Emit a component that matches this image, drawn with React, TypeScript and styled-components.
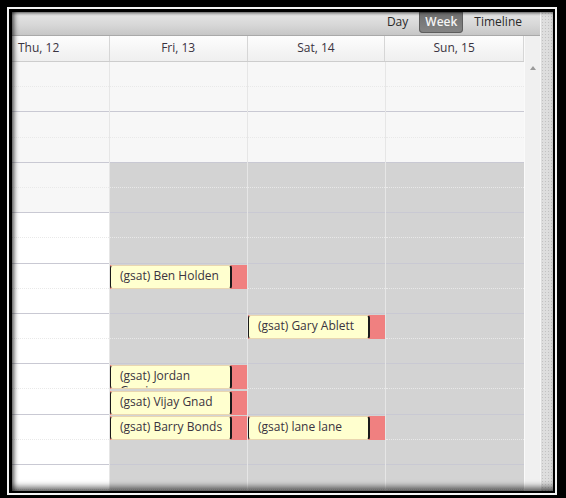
import React from 'react';
import styled, { createGlobalStyle } from 'styled-components';

const GlobalStyle = createGlobalStyle`
  html, body {
    margin: 0;
    padding: 0;
    background: #000;
  }
  body {
    font-family: "Open Sans", "Noto Sans", sans-serif;
    font-size: 12px;
  }
`;

const HALF = 25.2;
const ROWS = 18;

interface Day {
  label: string;
  width: number;
  alignLeft?: boolean;
  lightRows: number;
  openColor: string;
}

interface CalEvent {
  day: number;
  row: number;
  title: string;
}

const days: Day[] = [
  {label: 'Thu, 12', width: 98, alignLeft: true, lightRows: 6, openColor: '#ffffff'},
  {label: 'Fri, 13', width: 138, lightRows: 4, openColor: '#d3d3d3'},
  {label: 'Sat, 14', width: 138, lightRows: 4, openColor: '#d3d3d3'},
  {label: 'Sun, 15', width: 139, lightRows: 4, openColor: '#d3d3d3'},
];

const events: CalEvent[] = [
  {day: 1, row: 8, title: '(gsat) Ben Holden'},
  {day: 2, row: 10, title: '(gsat) Gary Ablett'},
  {day: 1, row: 12, title: '(gsat) Jordan Garrison'},
  {day: 1, row: 13, title: '(gsat) Vijay Gnad'},
  {day: 1, row: 14, title: '(gsat) Barry Bonds'},
  {day: 2, row: 14, title: '(gsat) lane lane'},
];

const Frame = styled.div`
  width: 566px;
  height: 498px;
  box-sizing: border-box;
  background: #000;
  padding: 7px 9px 3px 7px;
`;

const WhiteLine = styled.div`
  height: 100%;
  box-sizing: border-box;
  background: #f4f4f4;
  padding: 2px;
`;

const InnerBlack = styled.div`
  height: 100%;
  box-sizing: border-box;
  background: #000;
  padding: 3px 2px 2px 3px;
`;

const Content = styled.div`
  position: relative;
  display: flex;
  height: 100%;
  overflow: hidden;

  &::after {
    content: '';
    position: absolute;
    inset: 0;
    pointer-events: none;
    box-shadow:
      inset 5px 0 5px -3px rgba(0, 0, 0, 0.65),
      inset 0 -7px 6px -3px rgba(0, 0, 0, 0.6),
      inset 0 3px 3px -2px rgba(0, 0, 0, 0.5);
  }
`;

const Main = styled.div`
  flex: 1;
  display: flex;
  flex-direction: column;
  min-width: 0;
`;

const Strip = styled.div`
  width: 12px;
  flex-shrink: 0;
  border-left: 1px solid #f6f6f6;
  background-color: #dedede;
  background-image: radial-gradient(#c2c2c2 0.7px, transparent 0.9px);
  background-size: 3px 3px;
`;

const Toolbar = styled.div`
  height: 23px;
  flex-shrink: 0;
  display: flex;
  justify-content: flex-end;
  align-items: flex-start;
  padding-right: 10px;
  background: linear-gradient(#c8c8c8 0, #e2e2e2 4px, #d6d6d6 60%, #c6c6c6 100%);
  border-bottom: 1px solid #a9a9a9;
`;

const ViewButton = styled.div<{ $active?: boolean }>`
  height: 21px;
  line-height: 19px;
  padding: 0 ${p => (p.$active ? '6px' : '8px')};
  margin-left: 3px;
  border-radius: 0 0 4px 4px;
  color: ${p => (p.$active ? '#f4f4f4' : '#2a2a2a')};
  font-weight: ${p => (p.$active ? 600 : 400)};
  background: ${p => (p.$active ? 'linear-gradient(#6e6e6e, #858585)' : 'transparent')};
  box-shadow: ${p => (p.$active ? 'inset 0 0 0 1px #5e5e5e' : 'none')};
`;

const GridArea = styled.div`
  flex: 1;
  display: flex;
  min-height: 0;
`;

const Days = styled.div`
  flex: 1;
  display: flex;
  flex-direction: column;
  min-width: 0;
`;

const HeaderRow = styled.div`
  display: flex;
  height: 25px;
  flex-shrink: 0;
  border-bottom: 1px solid #cdcdcd;
  background: linear-gradient(#fdfdfd, #efefef);
`;

const HeaderCell = styled.div<{ $width: number; $left?: boolean }>`
  width: ${p => p.$width}px;
  box-sizing: border-box;
  border-right: 1px solid #d6d6d6;
  line-height: 24px;
  color: #3a3340;
  text-align: ${p => (p.$left ? 'left' : 'center')};
  padding-left: ${p => (p.$left ? '6px' : '0')};
`;

const Body = styled.div`
  flex: 1;
  display: flex;
  overflow: hidden;
`;

const DayColumn = styled.div<{ $width: number }>`
  position: relative;
  width: ${p => p.$width}px;
  flex-shrink: 0;
  box-sizing: border-box;
  border-right: 1px solid #e6e6e6;
`;

const Slot = styled.div<{ $bg: string; $hour: boolean }>`
  height: ${HALF}px;
  box-sizing: border-box;
  background: ${p => p.$bg};
  border-bottom: ${p => (p.$hour ? '1px solid #c9c9d3' : '1px dotted #e9e9e9')};
`;

const EventBar = styled.div`
  position: absolute;
  left: 0;
  right: 0;
  height: 24px;
  background: #f08080;
`;

const EventBox = styled.div`
  height: 100%;
  margin-right: 15px;
  box-sizing: border-box;
  background: #ffffcf;
  border: 1px solid #e9d6b0;
  border-left: 1px solid #1a1a1a;
  border-right: 2px solid #1a1a1a;
  border-radius: 3px;
  padding: 2px 0 0 9px;
  line-height: 15px;
  color: #3a3340;
  overflow: hidden;
`;

const Scrollbar = styled.div`
  width: 16px;
  flex-shrink: 0;
  background: #f0f0f0;
  border-left: 1px solid #fafafa;
  display: flex;
  justify-content: center;
  padding-top: 30px;
  box-sizing: border-box;
`;

const UpArrow = styled.div`
  width: 0;
  height: 0;
  border-left: 3.5px solid transparent;
  border-right: 3.5px solid transparent;
  border-bottom: 4px solid #9a9a9a;
`;

const App = (): JSX.Element => {
  return (
    <>
      <GlobalStyle />
      <Frame>
        <WhiteLine>
          <InnerBlack>
            <Content>
              <Main>
                <Toolbar>
                  <ViewButton>Day</ViewButton>
                  <ViewButton $active>Week</ViewButton>
                  <ViewButton>Timeline</ViewButton>
                </Toolbar>
                <GridArea>
                  <Days>
                    <HeaderRow>
                      {days.map(d => (
                        <HeaderCell key={d.label} $width={d.width} $left={d.alignLeft}>
                          {d.label}
                        </HeaderCell>
                      ))}
                    </HeaderRow>
                    <Body>
                      {days.map((d, di) => (
                        <DayColumn key={d.label} $width={d.width}>
                          {Array.from({length: ROWS}).map((_, i) => (
                            <Slot
                              key={i}
                              $bg={i < d.lightRows ? '#f7f7f7' : d.openColor}
                              $hour={i % 2 === 1}
                            />
                          ))}
                          {events.filter(e => e.day === di).map(e => (
                            <EventBar key={e.title} style={{top: e.row * HALF + 1}}>
                              <EventBox>{e.title}</EventBox>
                            </EventBar>
                          ))}
                        </DayColumn>
                      ))}
                    </Body>
                  </Days>
                  <Scrollbar>
                    <UpArrow />
                  </Scrollbar>
                </GridArea>
              </Main>
              <Strip />
            </Content>
          </InnerBlack>
        </WhiteLine>
      </Frame>
    </>
  );
};

export default App;
